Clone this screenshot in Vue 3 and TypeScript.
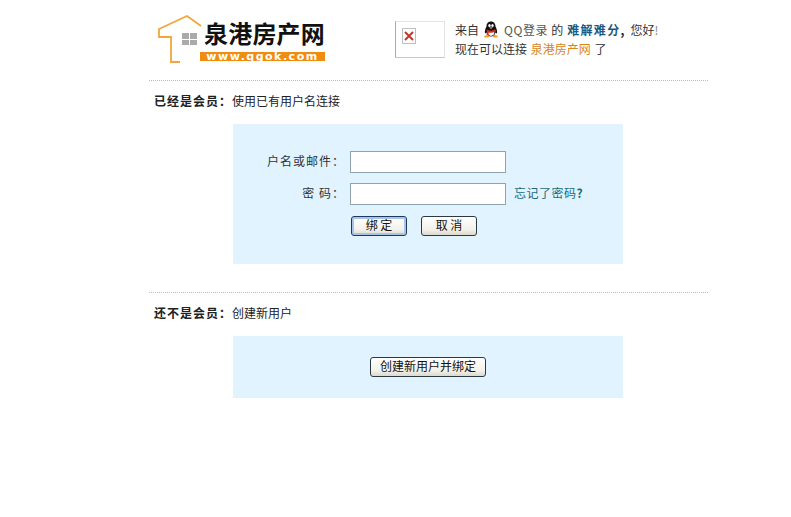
<template>
  <div class="page">
    <header class="head">
      <div class="logo">
        <svg class="house" width="46" height="52" viewBox="0 0 46 52">
          <path d="M23 48H14V23H2V15L30 2L44 12" fill="none" stroke="#f0a73c" stroke-width="1.800" />
          <path d="M25 19h7v6h-7zM33 19h7v6h-7zM25 26h7v5h-7zM33 26h7v5h-7z" fill="#aaa" />
        </svg>
        <div class="brand">
          <div class="brand-name">泉港房产网</div>
          <div class="brand-url">www.qgok.com</div>
        </div>
      </div>
      <div class="avatar">
        <span class="broken">
          <svg width="10" height="10" viewBox="0 0 10 10">
            <path d="M1 1l8 8M9 1l-8 8" stroke="#c0392b" stroke-width="2" />
          </svg>
        </span>
      </div>
      <div class="welcome">
        <p class="line">
          <span>来自</span>
          <svg class="qq" width="16" height="17" viewBox="0 0 16 17">
            <path d="M8 0.500C5 0.500 3.500 2.800 3.500 5.500C2.500 7.500 1.500 10 2 12.500L3.500 11.500C4 14 6 15.500 8 15.500S12 14 12.500 11.500L14 12.500C14.500 10 13.500 7.500 12.500 5.500C12.500 2.800 11 0.500 8 0.500Z" fill="#111" />
            <path d="M5 10.500h6c.8 1.500.5 3.500-3 4.500-3.500-1-3.800-3-3-4.500Z" fill="#fff" />
            <ellipse cx="6.500" cy="4.500" rx="1.200" ry="1.600" fill="#fff" />
            <ellipse cx="9.500" cy="4.500" rx="1.200" ry="1.600" fill="#fff" />
            <path d="M6 6.300h4L8 8Z" fill="#f0a020" />
            <path d="M3.500 8.500C6 10 10 10 12.500 8.500L13 10.500C10 12 6 12 5.500 11.500L5.800 14L3.500 13.500L4 11Z" fill="#dc2a1c" />
            <path d="M1.500 15C3 13.800 5 13.800 6 15C6.500 16.200 5.500 16.500 4 16.500H2C1.200 16.500 1 15.600 1.500 15ZM14.500 15C13 13.800 11 13.800 10 15C9.500 16.200 10.500 16.500 12 16.500H14C14.800 16.500 15 15.600 14.500 15Z" fill="#f2a51e" />
          </svg>
          <span class="qq-label">QQ登录</span>
          <span class="of">的</span>
          <b class="nick">难解难分</b><b class="comma">,</b>
          <span class="hello">您好<i>!</i></span>
        </p>
        <p>现在可以连接 <a class="site">泉港房产网</a> 了</p>
      </div>
    </header>

    <section class="block">
      <h2 class="title"><b>已经是会员：</b>使用已有用户名连接</h2>
      <form class="panel login" @submit.prevent>
        <div class="row">
          <label>户名或邮件：</label>
          <input type="text" />
        </div>
        <div class="row">
          <label>密 码：</label>
          <input type="password" />
          <a class="forgot">忘记了密码<b>?</b></a>
        </div>
        <div class="row actions">
          <button class="btn primary" type="submit">绑 定</button>
          <button class="btn" type="button">取 消</button>
        </div>
      </form>
    </section>

    <section class="block second">
      <h2 class="title"><b>还不是会员：</b>创建新用户</h2>
      <div class="panel create">
        <button class="btn wide" type="button">创建新用户并绑定</button>
      </div>
    </section>
  </div>
</template>

<script setup lang="ts">
</script>

<style>
html, body {
  background: #fff;
}
</style>

<style scoped>
.page {
  width: 559px;
  height: 517px;
  margin-left: 149px;
  box-sizing: border-box;
  font-family: "Noto Sans CJK SC", "Liberation Sans", sans-serif;
  font-size: 12px;
  color: #333;
  overflow: hidden;
}

.head {
  display: flex;
  height: 81px;
  box-sizing: border-box;
  border-bottom: 1px dotted #bbb;
}

.logo {
  display: flex;
  width: 246px;
  flex: none;
  padding: 14px 0 0 8px;
  box-sizing: border-box;
}

.house {
  flex: none;
  margin-right: -3px;
}

.brand {
  margin-top: 6px;
  width: 125px;
}

.brand-name {
  height: 26px;
  padding-left: 4px;
  font-size: 24px;
  line-height: 26px;
  font-weight: 700;
  letter-spacing: 0.200px;
  color: #111;
  white-space: nowrap;
}

.brand-url {
  margin-top: 6px;
  height: 9px;
  background: #f08c10;
  color: #fff;
  font-family: "DejaVu Sans", sans-serif;
  font-size: 11px;
  font-weight: 700;
  line-height: 9px;
  letter-spacing: 1.500px;
  text-align: center;
  white-space: nowrap;
}

.avatar {
  width: 50px;
  height: 37px;
  margin-top: 21px;
  flex: none;
  box-sizing: border-box;
  border: 1px solid #e4e4e4;
  border-left-color: #aaa;
  border-bottom-color: #c8c8c8;
  padding: 6px 0 0 6px;
}

.broken {
  display: flex;
  align-items: center;
  justify-content: center;
  width: 14px;
  height: 16px;
  box-sizing: border-box;
  border: 1px solid #c0c0c0;
}

.welcome {
  margin: 20px 0 0 10px;
  line-height: 19px;
  color: #333;
}

.welcome p {
  margin: 0;
  white-space: nowrap;
}

.line {
  display: flex;
  align-items: center;
}

.qq {
  margin: 0 5px 0 4px;
  flex: none;
}

.qq-label {
  color: #555;
  letter-spacing: 0.600px;
}

.of {
  margin-left: 3px;
}

.nick {
  color: #1a5a80;
  margin-left: 4px;
  letter-spacing: 1.300px;
}

.comma {
  color: #222;
  width: 10px;
  flex: none;
}

.hello i {
  font-style: normal;
  margin-left: 0;
  color: #888;
}

.site {
  color: #d9861c;
  margin: 0 1px;
}

.block {
  height: 211px;
  border-bottom: 1px dotted #bbb;
}

.block.second {
  height: auto;
  border-bottom: 0;
}

.title {
  margin: 0;
  padding: 10px 0 0 5px;
  height: 43px;
  box-sizing: border-box;
  font-size: 12px;
  font-weight: 400;
  line-height: 20px;
  color: #222;
}

.title b {
  letter-spacing: 1px;
}

.panel {
  width: 390px;
  margin-left: 84px;
  background: #e0f3fe;
  box-sizing: border-box;
}

.login {
  height: 140px;
  padding-top: 27px;
}

.row {
  display: flex;
  align-items: center;
  height: 22px;
  margin-bottom: 10px;
}

.row label {
  width: 112px;
  flex: none;
  text-align: right;
  margin-right: 5px;
  color: #333;
  letter-spacing: 1px;
  line-height: 18px;
  padding-bottom: 3px;
}

.row input {
  width: 156px;
  height: 22px;
  box-sizing: border-box;
  border: 1px solid #8fa5ad;
  background: #fff;
  padding: 0 3px;
  flex: none;
}

.forgot {
  margin-left: 8px;
  padding-bottom: 3px;
  line-height: 18px;
  color: #1a6a7a;
  letter-spacing: 0.500px;
}

.actions {
  height: 20px;
  padding-left: 118px;
  margin-top: 11px;
  margin-bottom: 0;
  gap: 14px;
}

.btn {
  font-family: inherit;
  font-size: 12px;
  color: #111;
  height: 20px;
  width: 56px;
  padding: 0 0 2px;
  line-height: 16px;
  border: 1px solid #2b3a42;
  border-radius: 3px;
  background: linear-gradient(#ffffff, #f2f1ea 70%, #dcd9cc);
}

.primary {
  border-color: #1d3a5a;
  box-shadow: inset 0 0 0 2px #a9c4ea;
}

.wide {
  width: 116px;
}

.create {
  height: 62px;
  padding-top: 21px;
  display: flex;
  justify-content: center;
  align-items: flex-start;
}
</style>
